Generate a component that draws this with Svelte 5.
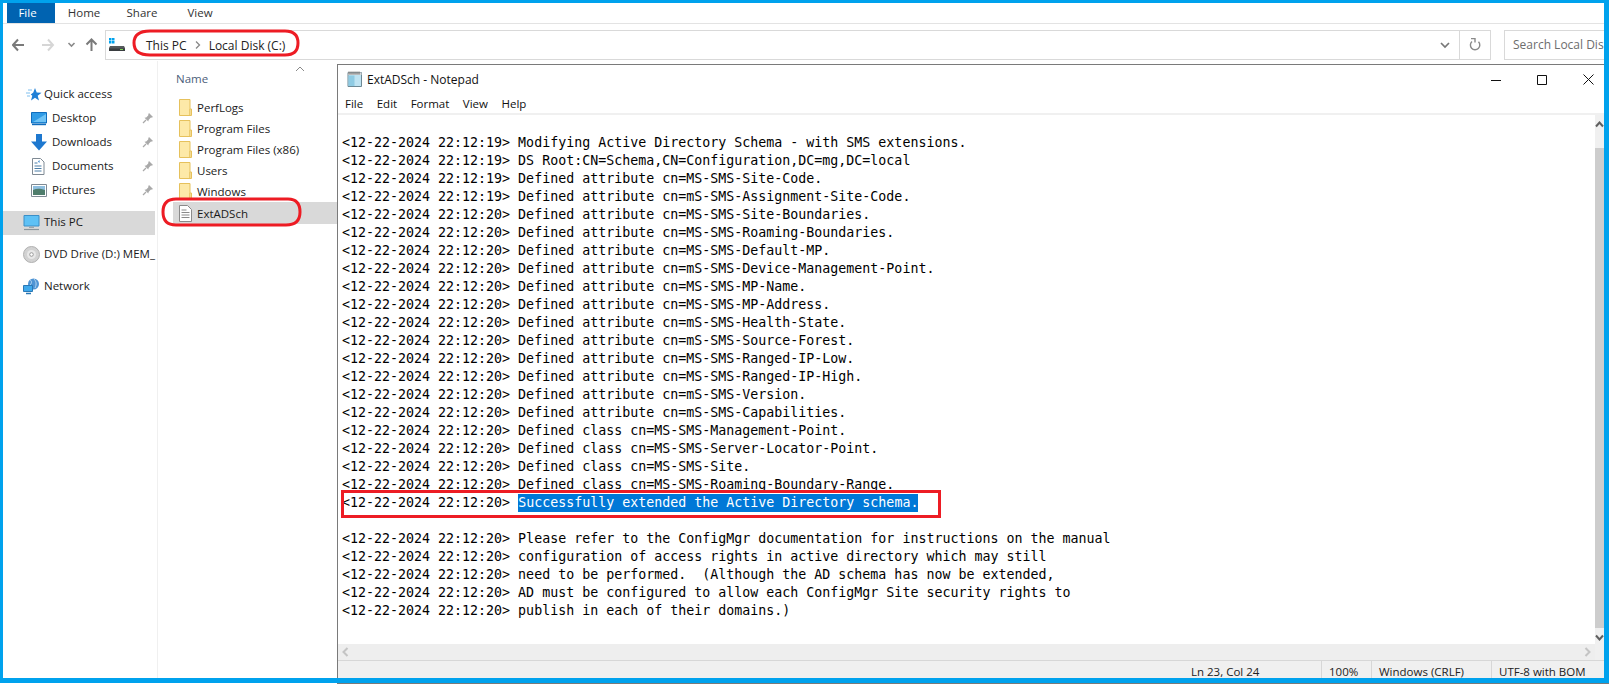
<script>
  const tabs = ["Home", "Share", "View"];
  const menus = ["File", "Edit", "Format", "View", "Help"];
  const quick = [
    { name: "Desktop", icon: "desktop" },
    { name: "Downloads", icon: "downloads" },
    { name: "Documents", icon: "documents" },
    { name: "Pictures", icon: "pictures" }
  ];
  const folders = ["PerfLogs", "Program Files", "Program Files (x86)", "Users", "Windows"];

  const t19 = "<12-22-2024 22:12:19> ";
  const t20 = "<12-22-2024 22:12:20> ";
  const before = [
    "",
    t19 + "Modifying Active Directory Schema - with SMS extensions.",
    t19 + "DS Root:CN=Schema,CN=Configuration,DC=mg,DC=local",
    t19 + "Defined attribute cn=MS-SMS-Site-Code.",
    t19 + "Defined attribute cn=mS-SMS-Assignment-Site-Code.",
    t20 + "Defined attribute cn=MS-SMS-Site-Boundaries.",
    t20 + "Defined attribute cn=MS-SMS-Roaming-Boundaries.",
    t20 + "Defined attribute cn=MS-SMS-Default-MP.",
    t20 + "Defined attribute cn=mS-SMS-Device-Management-Point.",
    t20 + "Defined attribute cn=MS-SMS-MP-Name.",
    t20 + "Defined attribute cn=MS-SMS-MP-Address.",
    t20 + "Defined attribute cn=mS-SMS-Health-State.",
    t20 + "Defined attribute cn=mS-SMS-Source-Forest.",
    t20 + "Defined attribute cn=MS-SMS-Ranged-IP-Low.",
    t20 + "Defined attribute cn=MS-SMS-Ranged-IP-High.",
    t20 + "Defined attribute cn=mS-SMS-Version.",
    t20 + "Defined attribute cn=mS-SMS-Capabilities.",
    t20 + "Defined class cn=MS-SMS-Management-Point.",
    t20 + "Defined class cn=MS-SMS-Server-Locator-Point.",
    t20 + "Defined class cn=MS-SMS-Site.",
    t20 + "Defined class cn=MS-SMS-Roaming-Boundary-Range."
  ];
  const after = [
    "",
    t20 + "Please refer to the ConfigMgr documentation for instructions on the manual",
    t20 + "configuration of access rights in active directory which may still",
    t20 + "need to be performed.  (Although the AD schema has now be extended,",
    t20 + "AD must be configured to allow each ConfigMgr Site security rights to",
    t20 + "publish in each of their domains.)"
  ];
</script>

{#snippet pin()}
  <svg class="pin" width="12" height="12" viewBox="0 0 12 12">
    <path d="M7 1l4 4-1 .6-1.400.2L6.600 8l-.3 1.600L2.500 5.800 4.200 5.400 6.200 3.400l.2-1.400z" fill="#a9a9a9" />
    <path d="M4 8l-3 3" stroke="#a9a9a9" stroke-width="1.200" />
  </svg>
{/snippet}

{#snippet folder()}
  <svg class="ficon" width="13" height="17" viewBox="0 0 13 17">
    <path d="M.5.500h10.500v16H.5z" fill="#fde9a8" stroke="#e6c15c" />
    <path d="M11 10h1.500v6.500H11z" fill="#fff3c9" stroke="#e6c15c" />
  </svg>
{/snippet}

{#snippet navIcon(kind)}
  <svg class="nicon" width="17" height="17" viewBox="0 0 17 17">
    {#if kind === "desktop"}
      <path d="M.5 2.500h15v10.500H.5z" fill="#2f9be6" stroke="#0f6cbd" />
      <path d="M2 12l13-8v8z" fill="#6fc3f5" />
      <path d="M1 14.500h14" stroke="#0f6cbd" stroke-width="1.400" />
    {:else if kind === "downloads"}
      <path d="M5 0h6v7.500h5L8 16.500 0 7.500h5z" fill="#1e78cf" />
    {:else if kind === "documents"}
      <path d="M1.500.500h8l3.500 3.500v12.500H1.500z" fill="#fff" stroke="#7f8a94" />
      <path d="M3.500 5h3M3.500 8h7M3.500 10.500h7M3.500 13h7" stroke="#4d7fa8" />
      <path d="M7 3.500l1.500-1.500v3z" fill="#2f7fc7" />
    {:else}
      <path d="M.5 2.500h15v12H.5z" fill="#fff" stroke="#7f8a94" />
      <path d="M2 4h12v5H2z" fill="#8fbfe0" />
      <path d="M2 8c4-1.800 7-1.500 12 0v5H2z" fill="#4f7d6c" />
    {/if}
  </svg>
{/snippet}

<div class="screen">
  <div class="explorer">
    <div class="ribbon">
      <div class="file-tab">File</div>
      {#each tabs as tab}
        <div class="tab">{tab}</div>
      {/each}
    </div>

    <div class="addressrow">
      <div class="navbtns">
        <svg width="90" height="24" viewBox="0 0 90 24">
          <path d="M12 12H1M6 6.500L1 12l5 5.500" fill="none" stroke="#7a7a7a" stroke-width="2" />
          <path d="M30 12h11M36 6.500L41 12l-5 5.500" fill="none" stroke="#d6d6d6" stroke-width="2" />
          <path d="M56.500 10l3 3 3-3" fill="none" stroke="#8a8a8a" stroke-width="1.600" />
          <path d="M79.500 18V6.500M74.500 11.500l5-5 5 5" fill="none" stroke="#7a7a7a" stroke-width="2" />
        </svg>
      </div>
      <div class="addressbar">
        <svg class="drive" width="16" height="14" viewBox="0 0 16 14">
          <path d="M0 0h2.500v2.500H0zM3 0h2.500v2.500H3zM0 3h2.500v2.500H0zM3 3h2.500v2.500H3z" fill="#00a2ed" />
          <path d="M1 8h14l1 2v3H0v-3z" fill="#55595c" />
          <path d="M0 10.500h16V13H0z" fill="#3a3d40" />
          <path d="M11 11h3v1h-3z" fill="#7ed957" />
        </svg>
        <span class="crumb">This PC</span>
        <svg class="sep" width="6" height="8" viewBox="0 0 6 8"><path d="M1 .5L4.500 4 1 7.500" fill="none" stroke="#888" stroke-width="1.300" /></svg>
        <span class="crumb">Local Disk (C:)</span>
        <div class="addr-end">
          <svg width="10" height="7" viewBox="0 0 10 7"><path d="M1 1l4 4 4-4" fill="none" stroke="#777" stroke-width="1.700" /></svg>
        </div>
        <div class="refresh">
          <svg width="12" height="14" viewBox="0 0 12 14">
            <path d="M3 3.500a4.700 4.700 0 1 0 6.500.3" fill="none" stroke="#8a8a8a" stroke-width="1.400" />
            <path d="M2 .5h4v4" fill="none" stroke="#8a8a8a" stroke-width="1.400" />
          </svg>
        </div>
      </div>
      <div class="search">Search Local Disk</div>
    </div>

    <div class="panes">
      <nav class="navpane">
        <div class="navrow top">
          <svg class="nicon" width="17" height="17" viewBox="0 0 17 17">
            <path d="M10 2l1.700 4.600 4.800.2-3.800 3 1.300 4.700-4-2.700-4 2.700 1.300-4.700-1.500-1.200L8.300 6.600z" fill="#1f7fd6" />
            <path d="M1 7h4M2 10h3M3 4h4" stroke="#7fbfee" />
          </svg>
          <span>Quick access</span>
        </div>
        {#each quick as item}
          <div class="navrow sub">
            {@render navIcon(item.icon)}
            <span>{item.name}</span>
            {@render pin()}
          </div>
        {/each}
        <div class="navrow active">
          <svg class="nicon" width="17" height="17" viewBox="0 0 17 17">
            <path d="M1 1.500h15v10.500H1z" fill="#5ec1f5" stroke="#3b8fc7" />
            <path d="M6 12.500h5v1.500H6z" fill="#9aa6ae" />
            <path d="M1 15.500h15" stroke="#8a959c" stroke-width="1.200" />
          </svg>
          <span>This PC</span>
        </div>
        <div class="navrow gap">
          <svg class="nicon" width="17" height="17" viewBox="0 0 17 17">
            <circle cx="8.500" cy="8.500" r="8" fill="#d2d2d2" stroke="#b0b0b0" />
            <circle cx="8.500" cy="8.500" r="4.500" fill="#e8e8e8" />
            <circle cx="8.500" cy="8.500" r="1.800" fill="#fff" stroke="#9a9a9a" />
          </svg>
          <span>DVD Drive (D:) MEM_</span>
        </div>
        <div class="navrow gap">
          <svg class="nicon" width="17" height="17" viewBox="0 0 17 17">
            <circle cx="10.500" cy="6" r="5.500" fill="#4f94d4" />
            <path d="M7 2c2 1 2 3 0 5M11 1c2 2 3 5 1 9" stroke="#b9d9f2" fill="none" />
            <path d="M.5 7.500h9v6h-9z" fill="#3fa9ec" stroke="#2a78b5" />
            <path d="M3 15.500h5" stroke="#2a78b5" stroke-width="1.500" />
          </svg>
          <span>Network</span>
        </div>
      </nav>

      <div class="listpane">
        <div class="listhead">
          <span class="colname">Name</span>
          <svg class="sort" width="10" height="6" viewBox="0 0 10 6"><path d="M1 5l4-4 4 4" fill="none" stroke="#8a8a8a" /></svg>
        </div>
        {#each folders as name}
          <div class="filerow">
            {@render folder()}
            <span>{name}</span>
          </div>
        {/each}
        <div class="filerow selected">
          <svg class="ficon" width="13" height="17" viewBox="0 0 13 17">
            <path d="M.5.500h8l4 4v12H.5z" fill="#fff" stroke="#8a8a8a" />
            <path d="M2.500 5h5M2.500 7.500h8M2.500 10h8M2.500 12.500h8" stroke="#8a8a8a" />
          </svg>
          <span>ExtADSch</span>
        </div>
      </div>
    </div>
  </div>

  <!-- notepad sits on top of the explorer window -->
  <section class="notepad">
    <header class="titlebar">
      <svg class="npicon" width="15" height="16" viewBox="0 0 15 16">
        <path d="M1 1.500h13.500v14H1z" fill="#bfe3f2" stroke="#6d8894" />
        <path d="M1 1.500h13.500v2.500H1z" fill="#d7d7d7" />
        <path d="M2 .5v3M4 .5v3M6 .5v3M8 .5v3M10 .5v3M12 .5v3" stroke="#666" />
        <path d="M1.500 4.500h6v10.500h-6z" fill="#8fcbe3" />
      </svg>
      <span class="title">ExtADSch - Notepad</span>
      <div class="winbtns">
        <div class="winbtn"><svg width="10" height="10" viewBox="0 0 10 10"><path d="M0 5.500h10" stroke="#111" /></svg></div>
        <div class="winbtn"><svg width="10" height="10" viewBox="0 0 10 10"><path d="M.5.500h9v9h-9z" fill="none" stroke="#111" /></svg></div>
        <div class="winbtn"><svg width="11" height="11" viewBox="0 0 11 11"><path d="M.5.500l10 10M10.500.500l-10 10" stroke="#111" /></svg></div>
      </div>
    </header>
    <div class="menubar">
      {#each menus as menu}
        <span>{menu}</span>
      {/each}
    </div>
    <div class="editor">
      <div class="textwrap">
        <div class="text">
          {#each before as line}
            <div class="line">{line}</div>
          {/each}
          <div class="line">{t20}<span class="sel">Successfully extended the Active Directory schema.</span></div>
          {#each after as line}
            <div class="line">{line}</div>
          {/each}
        </div>
        <div class="hscroll">
          <svg width="7" height="10" viewBox="0 0 7 10"><path d="M5.500 1L1.500 5l4 4" fill="none" stroke="#c4c4c4" stroke-width="2" /></svg>
          <svg width="7" height="10" viewBox="0 0 7 10"><path d="M1.500 1l4 4-4 4" fill="none" stroke="#c4c4c4" stroke-width="2" /></svg>
        </div>
      </div>
      <div class="vscroll">
        <svg width="9" height="7" viewBox="0 0 9 7"><path d="M1 5.500l3.500-4 3.500 4" fill="none" stroke="#606060" stroke-width="2" /></svg>
        <div class="thumb"></div>
        <svg width="9" height="7" viewBox="0 0 9 7"><path d="M1 1.500l3.500 4 3.500-4" fill="none" stroke="#606060" stroke-width="2" /></svg>
      </div>
    </div>
    <footer class="statusbar">
      <div class="cell pos">Ln 23, Col 24</div>
      <div class="cell zoom">100%</div>
      <div class="cell eol">Windows (CRLF)</div>
      <div class="cell enc">UTF-8 with BOM</div>
    </footer>
  </section>

  <!-- the notepad's bottom edge shows just under the blue frame -->
  <div class="edge"></div>

  <!-- red markup drawn over the screenshot -->
  <svg class="markup" width="1610" height="684" viewBox="0 0 1610 684">
    <path d="M150 31H285Q298 31 298 43 298 55 285 55H150Q134 55 134 43 134 31 150 31z" />
    <path d="M176 199H288Q300 199 300 212 300 225 286 225H176Q163 225 163 212 163 199 176 199z" />
    <rect x="342.500" y="491.500" width="597" height="25" />
  </svg>
</div>

<style>
  :global(body) {
    margin: 0;
    overflow: hidden;
    background: #fff;
  }

  .screen {
    position: relative;
    width: 1610px;
    height: 684px;
    overflow: hidden;
    font-family: "Open Sans", "Noto Sans", sans-serif;
    font-size: 11.5px;
    color: #1a1a1a;
    background: #fff;
  }

  .explorer {
    box-sizing: border-box;
    width: 1609px;
    height: 683px;
    display: flex;
    flex-direction: column;
    border: solid #00a2ed;
    border-width: 3px 5px 5px 3px;
    overflow: hidden;
  }

  .ribbon {
    flex: none;
    height: 20px;
    display: flex;
    border-bottom: 1px solid #e3e3e3;
  }

  .file-tab {
    box-sizing: border-box;
    width: 48px;
    margin-left: 4px;
    padding-right: 7px;
    background: #0063b1;
    color: #fff;
    text-align: center;
    line-height: 20px;
  }

  .tab {
    width: 58px;
    text-align: center;
    line-height: 20px;
    color: #333;
  }

  .addressrow {
    flex: none;
    height: 30px;
    margin-top: 6px;
    display: flex;
    align-items: stretch;
  }

  .navbtns {
    width: 102px;
    padding-left: 9px;
    box-sizing: border-box;
    display: flex;
    align-items: center;
  }

  .addressbar {
    flex: 1;
    display: flex;
    align-items: center;
    border: 1px solid #d9d9d9;
    font-size: 12px;
    min-width: 0;
  }

  .drive {
    margin: 0 0 0 3px;
  }

  .crumb {
    color: #222;
    white-space: nowrap;
  }

  .crumb:first-of-type {
    margin-left: 21px;
  }

  .sep {
    margin: 0 8px;
  }

  .addr-end {
    margin-left: auto;
    width: 29px;
    text-align: center;
    line-height: 0;
  }

  .refresh {
    align-self: stretch;
    width: 30px;
    border-left: 1px solid #d9d9d9;
    display: flex;
    align-items: center;
    justify-content: center;
  }

  .search {
    width: 100px;
    margin-left: 13px;
    padding-left: 8px;
    box-sizing: border-box;
    flex: none;
    border: 1px solid #d9d9d9;
    border-right: none;
    font-size: 12px;
    line-height: 28px;
    color: #6d6d6d;
    white-space: nowrap;
  }

  .panes {
    flex: 1;
    min-height: 0;
    display: flex;
    margin-top: 1px;
  }

  .navpane {
    width: 154px;
    flex: none;
    padding-top: 22px;
    border-right: 1px solid #f0f0f0;
  }

  .navrow {
    box-sizing: border-box;
    height: 24px;
    display: flex;
    align-items: center;
    white-space: nowrap;
    overflow: hidden;
    padding-left: 20px;
    padding-bottom: 2px;
    gap: 4px;
  }

  .navrow span {
    padding-bottom: 2px;
  }

  .navrow.top {
    padding-left: 22px;
    gap: 2px;
  }

  .navrow.sub {
    padding-left: 28px;
    gap: 4px;
    position: relative;
  }

  .navrow.active {
    background: #d9d9d9;
    width: 152px;
    margin-top: 8px;
  }

  .navrow.gap {
    margin-top: 8px;
  }

  .nicon {
    flex: none;
  }

  .pin {
    position: absolute;
    left: 139px;
    top: 5px;
  }

  .listpane {
    flex: 1;
    min-width: 0;
  }

  .listhead {
    height: 36px;
    position: relative;
  }

  .colname {
    position: absolute;
    left: 18px;
    top: 10px;
    color: #4c607a;
  }

  .sort {
    position: absolute;
    left: 137px;
    top: 5px;
  }

  .filerow {
    height: 21px;
    display: flex;
    align-items: center;
    gap: 5px;
    padding-left: 6px;
    margin-left: 15px;
    color: #1a1a1a;
    white-space: nowrap;
  }

  .filerow.selected {
    height: 22px;
    background: #d9d9d9;
  }

  .notepad {
    position: absolute;
    left: 337px;
    top: 64px;
    width: 1267px;
    height: 614px;
    box-sizing: border-box;
    display: flex;
    flex-direction: column;
    background: #fff;
    border-left: 1px solid #7a7a7a;
    border-top: 1px solid #7a7a7a;
  }

  .edge {
    position: absolute;
    left: 337px;
    top: 683px;
    width: 1272px;
    height: 1px;
    background: #7a7a7a;
  }

  .titlebar {
    flex: none;
    height: 27px;
    display: flex;
    align-items: center;
    padding-left: 9px;
    gap: 5px;
  }

  .title {
    color: #111;
    font-size: 12px;
    padding-top: 2px;
  }

  .winbtns {
    margin-left: auto;
    margin-right: -7px;
    display: flex;
  }

  .winbtn {
    width: 46px;
    display: flex;
    justify-content: center;
    align-items: center;
    padding-top: 2px;
  }

  .menubar {
    flex: none;
    height: 21px;
    display: flex;
    align-items: center;
    gap: 13.5px;
    padding-left: 7px;
    padding-top: 2px;
    box-sizing: border-box;
    color: #111;
  }

  .editor {
    flex: 1;
    min-height: 0;
    display: flex;
    border-top: 2px solid #f0f0f0;
  }

  .textwrap {
    flex: 1;
    min-width: 0;
    display: flex;
    flex-direction: column;
  }

  .text {
    flex: 1;
    min-height: 0;
    padding: 1px 0 0 4px;
    overflow: hidden;
    font-family: "DejaVu Sans Mono", "Liberation Mono", monospace;
    font-size: 13.3px;
    line-height: 18px;
    color: #000;
  }

  .line {
    height: 18px;
    white-space: pre;
  }

  .sel {
    display: inline-block;
    height: 18px;
    background: #0078d7;
    color: #fff;
  }

  .hscroll {
    flex: none;
    height: 16px;
    background: #eeeeee;
    display: flex;
    align-items: center;
    justify-content: space-between;
    padding: 0 4px;
  }

  .vscroll {
    flex: none;
    width: 9px;
    background: #f0f0f0;
    display: flex;
    flex-direction: column;
    align-items: center;
    justify-content: space-between;
    padding: 6px 0 19px;
    overflow: hidden;
  }

  .thumb {
    flex: 1;
    align-self: stretch;
    margin: 20px 0 6px;
    background: #cdcdcd;
  }

  .statusbar {
    flex: none;
    height: 18px;
    display: flex;
    background: #f0f0f0;
    border-top: 1px solid #d7d7d7;
    overflow: hidden;
    box-sizing: border-box;
  }

  .cell {
    padding-left: 7px;
    line-height: 21px;
    color: #222;
    border-left: 1px solid #d7d7d7;
    box-sizing: border-box;
    white-space: nowrap;
  }

  .cell.pos {
    margin-left: 845px;
    width: 138px;
    padding-left: 8px;
    border-left: none;
  }

  .cell.zoom {
    width: 50px;
  }

  .cell.eol {
    width: 120px;
  }

  .cell.enc {
    flex: 1;
  }

  .markup {
    position: absolute;
    left: 0;
    top: 0;
    pointer-events: none;
  }

  .markup path,
  .markup rect {
    fill: none;
    stroke: #ed1c24;
    stroke-width: 3;
  }
</style>
